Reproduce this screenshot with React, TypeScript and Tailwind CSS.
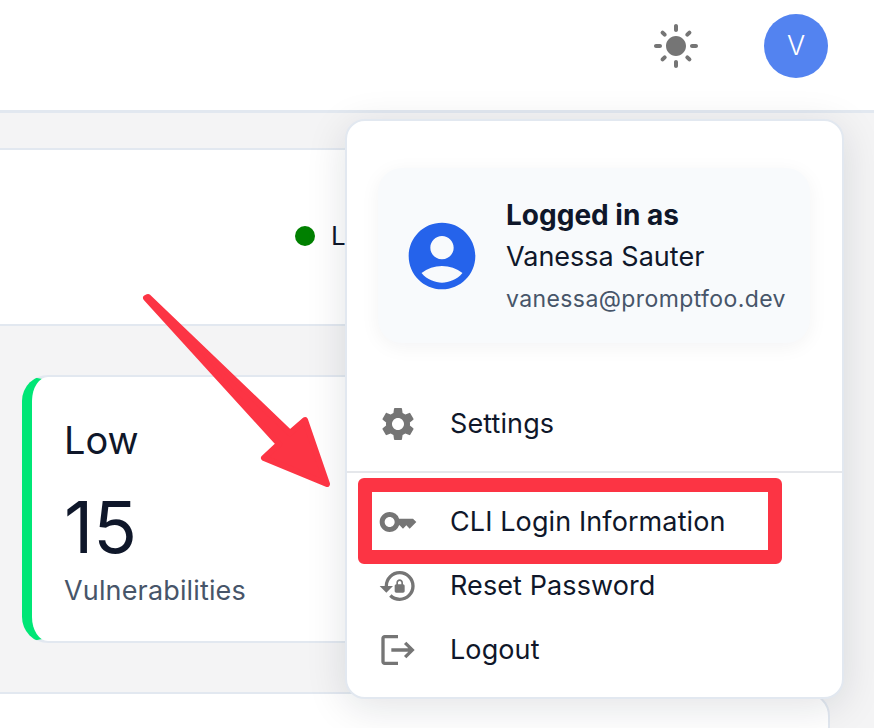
import React from 'react';
import { MdAccountCircle, MdKey, MdLightMode, MdLockReset, MdLogout, MdSettings } from 'react-icons/md';

const menuItems = [
  { label: 'CLI Login Information', icon: MdKey },
  { label: 'Reset Password', icon: MdLockReset },
  { label: 'Logout', icon: MdLogout },
];

function MenuRow({ label, icon: Icon }: { label: string; icon: React.ComponentType<{ className?: string }> }) {
  return (
    <div className="flex h-16 items-center pl-[31px]">
      <Icon className="h-10 w-10 shrink-0 text-[#757575]" />
      <span className="ml-[32px] text-[27px] leading-8 tracking-[0.1px] text-[#0f172a]">{label}</span>
    </div>
  );
}

function UserMenu() {
  return (
    <div className="absolute left-[345px] top-[119px] h-[580px] w-[499px] rounded-[20px] border-2 border-[#e2e8f0] bg-white pt-[47px] shadow-[0_8px_40px_rgba(15,23,42,0.12)]">
      <div className="ml-[31px] mr-[32px] flex h-[175px] items-center rounded-[24px] bg-[#f8fafc] pl-[24px] shadow-[0_4px_20px_rgba(15,23,42,0.05)]">
        <MdAccountCircle className="h-[80px] w-[80px] shrink-0 text-[#2563eb]" />
        <div className="ml-[24px] flex flex-col pt-[2px]">
          <span className="text-[28px] font-bold leading-[42px] text-[#0f172a]">Logged in as</span>
          <span className="text-[27px] leading-[42px] text-[#0f172a]">Vanessa Sauter</span>
          <span className="text-[23px] leading-[42px] tracking-[0.4px] text-[#475569]">vanessa@promptfoo.dev</span>
        </div>
      </div>
      <div className="mt-[49px] pb-[15px]">
        <MenuRow label="Settings" icon={MdSettings} />
      </div>
      <div className="border-t-2 border-[#e5e7eb] pt-[17px]">
        {menuItems.map(item => (
          <MenuRow key={item.label} label={item.label} icon={item.icon} />
        ))}
      </div>
    </div>
  );
}

export default function App() {
  return (
    <div className="relative h-[728px] w-[874px] overflow-hidden bg-[#f4f4f5] font-['Inter',sans-serif]">
      <header className="flex h-[113px] items-center justify-end border-b-[3px] border-[#e2e8f0] bg-white pr-[46px] pb-[18px]">
        <MdLightMode className="h-[48px] w-[48px] text-[#757575]" />
        <div className="ml-[64px] flex h-16 w-16 items-center justify-center rounded-full bg-[#5383f0] text-[27px] font-light text-white">
          V
        </div>
      </header>

      <main className="flex flex-col pt-[35px]">
        <section className="-ml-6 flex h-[178px] w-[850px] items-center rounded-[24px] border-2 border-[#e2e8f0] bg-white pb-[3px] pl-[317px]">
          <span className="h-5 w-5 rounded-full bg-[#008000]" />
          <span className="ml-[16px] text-[26px] text-[#0f172a]">L</span>
        </section>

        <section className="ml-[22px] mt-[49px] flex h-[268px] w-[500px] flex-col rounded-[26px] border-y-2 border-r-2 border-l-[10px] border-y-[#e2e8f0] border-r-[#e2e8f0] border-l-[#00e676] bg-white pl-[32px] pt-[41px]">
          <span className="text-[38px] leading-[44px] text-[#0f172a]">Low</span>
          <span className="mt-[27px] text-[72px] leading-[76px] text-[#0f172a]">15</span>
          <span className="mt-[10px] text-[27px] leading-8 tracking-[0.15px] text-[#475569]">Vulnerabilities</span>
        </section>

        <section className="-ml-6 mt-[49px] h-[60px] w-[854px] rounded-t-[24px] border-2 border-[#e2e8f0] bg-white" />
      </main>

      <UserMenu />

      <div className="absolute left-[358px] top-[478px] h-[86px] w-[424px] rounded-[6px] border-[14px] border-[#fc3444]" />

      <svg className="absolute left-0 top-0 h-[728px] w-[874px]" viewBox="0 0 874 728" fill="none">
        <path
          d="M146 298 L279 444 L264 458 L327 484 L305 420 L290 433 L148 297 Z"
          fill="#fc3444"
          stroke="#fc3444"
          strokeWidth="6"
          strokeLinejoin="round"
        />
      </svg>
    </div>
  );
}
